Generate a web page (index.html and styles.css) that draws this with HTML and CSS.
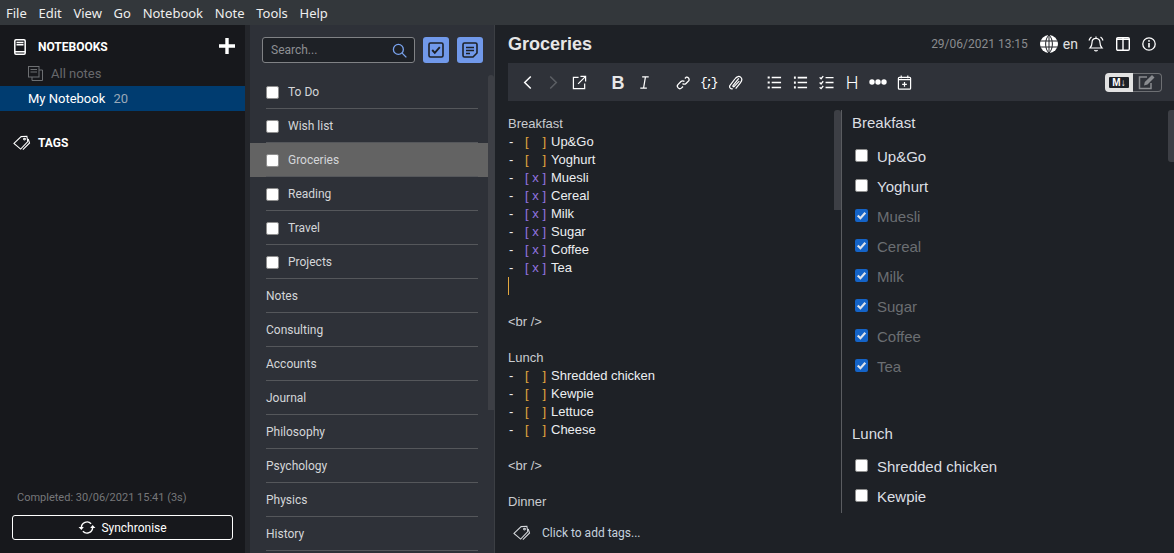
FILE: index.html
```html
<!DOCTYPE html>
<html>
  <head>
    <title>Joplin</title>
    <link rel="stylesheet" href="styles.css">
  </head>
  <body>
    <nav class="menubar">
      <span>File</span><span>Edit</span><span>View</span><span>Go</span><span>Notebook</span><span>Note</span><span>Tools</span><span>Help</span>
    </nav>

    <div class="app">
      <aside class="sidebar">
        <div class="side-head notebooks-head">
          <svg class="side-icon" viewBox="0 0 12 16" fill="none" stroke="#fff" stroke-width="1.500"><rect x="0.800" y="0.800" width="10.400" height="14.400" rx="1.200"/><path d="M2.500 3.500h7M2.500 5.800h7M1 12.800h10"/></svg>
          <span>NOTEBOOKS</span>
          <svg class="plus" viewBox="0 0 16 16" fill="#fff"><path d="M6.300 0h3.400v6.300H16v3.400H9.700V16H6.300V9.700H0V6.300h6.300z"/></svg>
        </div>
        <div class="all-notes">
          <svg viewBox="0 0 15 15" fill="none" stroke="#6d6f72" stroke-width="1"><rect x="0.500" y="0.500" width="10.500" height="10.500"/><path d="M2.500 3.500h6.500M2.500 6h6.500M11 4h3.500v10.500H4V11"/></svg>
          <span>All notes</span>
        </div>
        <div class="notebook-row">My Notebook <span class="count">20</span></div>
        <div class="side-head tags-head">
          <svg class="tag-icon" viewBox="0 0 20 18" fill="none" stroke="#fff" stroke-width="1.200"><path d="M1 9.500 9 1.800 15.500 1.500 16.500 7.500 8.500 15.800z"/><path d="M17 4.500 18.500 9 11 16.500"/><circle cx="12.800" cy="4.600" r="1"/></svg>
          <span>TAGS</span>
        </div>
        <div class="sync-area">
          <div class="sync-status">Completed: 30/06/2021 15:41 (3s)</div>
          <button class="sync-btn">
            <svg viewBox="0 0 18 16" fill="none" stroke="#fff" stroke-width="1.500"><path d="M3 8a6 6 0 0 1 10.400-4M15 8a6 6 0 0 1-10.400 4"/><path fill="#fff" stroke="none" d="M0 7.500h5.600L3 10.600zM18 8.500h-5.600L15 5.400z"/></svg>
            Synchronise
          </button>
        </div>
      </aside>

      <section class="note-list">
        <div class="list-head">
          <div class="search">
            <span>Search...</span>
            <svg viewBox="0 0 16 16" fill="none" stroke="#7aa3ee" stroke-width="1.400"><circle cx="6.800" cy="6.800" r="5.300"/><path d="m10.800 10.800 4.500 4.500"/></svg>
          </div>
          <button class="new-btn">
            <svg viewBox="0 0 16 16" fill="none" stroke="#1d2026" stroke-width="1.600"><rect x="1" y="1" width="14" height="14" rx="1.500"/><path d="m4.200 8 2.600 2.800 5-5.600" stroke-width="1.900"/></svg>
          </button>
          <button class="new-btn">
            <svg viewBox="0 0 16 16" fill="none" stroke="#1d2026" stroke-width="1.600"><path d="M2.500 1h11A1.500 1.500 0 0 1 15 2.500V11l-4 4H2.500A1.500 1.500 0 0 1 1 13.500v-11A1.500 1.500 0 0 1 2.500 1z"/><path d="M4 5.500h8M4 8.500h8M4 11.500h4"/></svg>
          </button>
        </div>
        <div class="list-body">
          <ul class="notes">
            <li><span class="check"></span><span class="label">To Do</span></li>
            <li><span class="check"></span><span class="label">Wish list</span></li>
            <li class="selected"><span class="check"></span><span class="label">Groceries</span></li>
            <li><span class="check"></span><span class="label">Reading</span></li>
            <li><span class="check"></span><span class="label">Travel</span></li>
            <li><span class="check"></span><span class="label">Projects</span></li>
            <li><span class="label">Notes</span></li>
            <li><span class="label">Consulting</span></li>
            <li><span class="label">Accounts</span></li>
            <li><span class="label">Journal</span></li>
            <li><span class="label">Philosophy</span></li>
            <li><span class="label">Psychology</span></li>
            <li><span class="label">Physics</span></li>
            <li><span class="label">History</span></li>
          </ul>
          <div class="list-scroll"><div class="list-thumb"></div></div>
        </div>
      </section>

      <main class="editor">
        <header class="title-row">
          <h1>Groceries</h1>
          <span class="stamp">29/06/2021 13:15</span>
          <svg class="globe" viewBox="0 0 18 18" fill="#fff"><circle cx="9" cy="9" r="9"/><path fill="none" stroke="#1e2126" stroke-width="1" d="M0 6h18M0 12h18M9 0v18M9 0C4.500 4 4.500 14 9 18M9 0c4.500 4 4.500 14 0 18"/></svg>
          <span class="lang">en</span>
          <svg class="head-icon bell" viewBox="0 0 16 16" fill="none" stroke="#fff" stroke-width="1.200"><path d="M8 2.300c-2.800 0-4 2-4 4.500 0 2.500-.8 4-2 5.200h12c-1.200-1.200-2-2.700-2-5.200 0-2.500-1.200-4.500-4-4.500zM6.500 14a1.700 1.700 0 0 0 3 0M1 4.500C1.500 3 2.300 1.800 3.500 1M15 4.500C14.500 3 13.700 1.800 12.500 1M8 .6v1.700"/></svg>
          <svg class="head-icon layout" viewBox="0 0 14 14" fill="none" stroke="#fff" stroke-width="1.400"><rect x="0.700" y="0.700" width="12.600" height="12.600" rx="1.200"/><path d="M7 1v12M1 2.200h12"/></svg>
          <svg class="head-icon info" viewBox="0 0 14 14" fill="none" stroke="#fff" stroke-width="1.300"><circle cx="7" cy="7" r="6.200"/><path d="M7 6v4.500" stroke-width="1.600"/><circle cx="7" cy="3.900" r="0.900" fill="#fff" stroke="none"/></svg>
        </header>

        <div class="toolbar">
          <div class="tool-group">
            <span class="tool"><svg viewBox="0 0 16 16" fill="none" stroke="#fff" stroke-width="1.600"><path d="M11.500 1.500 5 8l6.500 6.500"/></svg></span>
            <span class="tool"><svg viewBox="0 0 16 16" fill="none" stroke="#5c5f64" stroke-width="1.600"><path d="M4.500 1.500 11 8l-6.500 6.500"/></svg></span>
            <span class="tool"><svg viewBox="0 0 16 16" fill="none" stroke="#fff" stroke-width="1.300"><path d="M7 2.500H1.500V14.500H13.500V9M6.500 9.500 14 2M9 1.500h5.500V7"/></svg></span>
          </div>
          <div class="tool-group">
            <span class="tool tool-b">B</span>
            <span class="tool"><svg viewBox="0 0 16 16" fill="none" stroke="#fff" stroke-width="1.300"><path d="M5.500 2h7M3.500 14h7M9 2 7 14"/></svg></span>
          </div>
          <div class="tool-group">
            <span class="tool"><svg viewBox="0 0 16 16" fill="none" stroke="#fff" stroke-width="1.400"><path d="M7 9a2.600 2.600 0 0 0 3.700 0l3-3A2.600 2.600 0 0 0 11 2.300L9.500 3.800M9 7a2.600 2.600 0 0 0-3.700 0l-3 3A2.600 2.600 0 0 0 6 13.700l1.500-1.500"/></svg></span>
            <span class="tool tool-code">{;}</span>
            <span class="tool"><svg viewBox="0 0 16 16" fill="none" stroke="#fff" stroke-width="1.300"><path d="M5 14.500c-2 .8-4-1-3-3.200L7.500 4c2-2.800 4.500-3 6.200-1.500 1.500 1.500 1.300 3.600-.5 5.800l-5 6.200M11.500 3.500l-6 7.500c-.8 1 .3 2 1.200 1.200L12 6.500"/></svg></span>
          </div>
          <div class="tool-group">
            <span class="tool"><svg viewBox="0 0 16 16" fill="none" stroke="#fff" stroke-width="1.500"><path d="M5 2.700h10M5 8h10M5 13.300h10"/><path stroke-width="2.200" stroke-dasharray="2.200 3.100" d="M1.800 1.600v13"/></svg></span>
            <span class="tool"><svg viewBox="0 0 16 16" fill="none" stroke="#fff" stroke-width="1.800"><path d="M5 2.700h10M5 8h10M5 13.300h10"/><path stroke-width="2" stroke-dasharray="2.500 2.800" d="M2 1.500v13"/></svg></span>
            <span class="tool"><svg viewBox="0 0 16 16" fill="none" stroke="#fff" stroke-width="1.400"><path d="M7 2.700h8.500M7 8h8.500M7 13.300h8.500M.7 2.500l1.500 1.500L4.500 1.200M.7 8l1.500 1.500 2.300-2.800M.7 13l1.500 1.500 2.300-2.800"/></svg></span>
            <span class="tool tool-h">H</span>
            <span class="tool"><svg class="dots" viewBox="0 0 18 6" fill="#fff"><circle cx="3" cy="3" r="2.700"/><circle cx="9" cy="3" r="2.700"/><circle cx="15" cy="3" r="2.700"/></svg></span>
            <span class="tool"><svg viewBox="0 0 16 16" fill="none" stroke="#fff" stroke-width="1.300"><rect x="1.500" y="2.500" width="13" height="12.500" rx="1"/><path d="M1.500 5h13M4.500 .5v3M11.500 .5v3M8 7.500v5M5.500 10h5"/></svg></span>
          </div>
          <div class="toggle">
            <span class="toggle-md"><span class="md-badge">M&#8595;</span></span>
            <span class="toggle-edit"><svg viewBox="0 0 18 16" fill="none" stroke="#8a8c90" stroke-width="1.500"><path d="M13 9v5.500H1.500V3H9"/><path fill="#8a8c90" stroke="none" d="M6 11.500 6.800 8 14 1l2.500 2.500-7 7z"/></svg></span>
          </div>
        </div>

        <div class="panes">
          <div class="source">
            <div class="source-text">
              <div>Breakfast</div>
              <div class="item"><span class="dash">-</span><span class="box todo">[<i>&nbsp;</i>]</span>Up&amp;Go</div>
              <div class="item"><span class="dash">-</span><span class="box todo">[<i>&nbsp;</i>]</span>Yoghurt</div>
              <div class="item"><span class="dash">-</span><span class="box done">[<i>x</i>]</span>Muesli</div>
              <div class="item"><span class="dash">-</span><span class="box done">[<i>x</i>]</span>Cereal</div>
              <div class="item"><span class="dash">-</span><span class="box done">[<i>x</i>]</span>Milk</div>
              <div class="item"><span class="dash">-</span><span class="box done">[<i>x</i>]</span>Sugar</div>
              <div class="item"><span class="dash">-</span><span class="box done">[<i>x</i>]</span>Coffee</div>
              <div class="item"><span class="dash">-</span><span class="box done">[<i>x</i>]</span>Tea</div>
              <div class="cursor-line"><span class="cursor"></span></div>
              <div>&nbsp;</div>
              <div>&lt;br /&gt;</div>
              <div>&nbsp;</div>
              <div>Lunch</div>
              <div class="item"><span class="dash">-</span><span class="box todo">[<i>&nbsp;</i>]</span>Shredded chicken</div>
              <div class="item"><span class="dash">-</span><span class="box todo">[<i>&nbsp;</i>]</span>Kewpie</div>
              <div class="item"><span class="dash">-</span><span class="box todo">[<i>&nbsp;</i>]</span>Lettuce</div>
              <div class="item"><span class="dash">-</span><span class="box todo">[<i>&nbsp;</i>]</span>Cheese</div>
              <div>&nbsp;</div>
              <div>&lt;br /&gt;</div>
              <div>&nbsp;</div>
              <div>Dinner</div>
            </div>
            <div class="source-thumb"></div>
          </div>
          <div class="preview">
            <div class="preview-text">
              <p class="preview-head">Breakfast</p>
              <div class="task"><span class="check small"></span>Up&amp;Go</div>
              <div class="task"><span class="check small"></span>Yoghurt</div>
              <div class="task ticked"><span class="tick"><svg viewBox="0 0 12 12" fill="none" stroke="#dfe3ea" stroke-width="2"><path d="m2.500 6 2.500 2.500 4.500-5"/></svg></span>Muesli</div>
              <div class="task ticked"><span class="tick"><svg viewBox="0 0 12 12" fill="none" stroke="#dfe3ea" stroke-width="2"><path d="m2.500 6 2.500 2.500 4.500-5"/></svg></span>Cereal</div>
              <div class="task ticked"><span class="tick"><svg viewBox="0 0 12 12" fill="none" stroke="#dfe3ea" stroke-width="2"><path d="m2.500 6 2.500 2.500 4.500-5"/></svg></span>Milk</div>
              <div class="task ticked"><span class="tick"><svg viewBox="0 0 12 12" fill="none" stroke="#dfe3ea" stroke-width="2"><path d="m2.500 6 2.500 2.500 4.500-5"/></svg></span>Sugar</div>
              <div class="task ticked"><span class="tick"><svg viewBox="0 0 12 12" fill="none" stroke="#dfe3ea" stroke-width="2"><path d="m2.500 6 2.500 2.500 4.500-5"/></svg></span>Coffee</div>
              <div class="task ticked"><span class="tick"><svg viewBox="0 0 12 12" fill="none" stroke="#dfe3ea" stroke-width="2"><path d="m2.500 6 2.500 2.500 4.500-5"/></svg></span>Tea</div>
              <p class="preview-head lunch">Lunch</p>
              <div class="task"><span class="check small"></span>Shredded chicken</div>
              <div class="task"><span class="check small"></span>Kewpie</div>
            </div>
            <div class="preview-thumb"></div>
          </div>
        </div>

        <footer class="tag-bar">
          <svg viewBox="0 0 20 18" fill="none" stroke="#d5d8dc" stroke-width="1.200"><path d="M1 9.500 9 1.800 15.500 1.500 16.500 7.500 8.500 15.800z"/><path d="M17 4.500 18.500 9 11 16.500"/><circle cx="12.800" cy="4.600" r="1"/></svg>
          <span>Click to add tags...</span>
        </footer>
      </main>
    </div>
  </body>
</html>
```

FILE: styles.css
```css
* {
  box-sizing: border-box;
}

html,
body {
  height: 100%;
}

body {
  margin: 0;
  display: flex;
  flex-direction: column;
  overflow: hidden;
  background-color: #1e2126;
  font-family: Roboto, sans-serif;
  font-size: 12px;
  color: #e0e0e0;
}

svg {
  display: block;
  flex: none;
}

/* menu */
.menubar {
  flex: none;
  height: 25px;
  display: flex;
  align-items: center;
  gap: 11.7px;
  padding-left: 6px;
  background-color: #33373b;
  font-family: "Noto Sans", sans-serif;
  font-size: 13px;
  color: #eeeeee;
}

.app {
  flex: 1;
  min-height: 0;
  display: flex;
}

/* left sidebar */
.sidebar {
  flex: none;
  width: 245px;
  display: flex;
  flex-direction: column;
  background-color: #17181c;
}

.side-head {
  display: flex;
  align-items: center;
  font-weight: 700;
  font-size: 12px;
  color: #ffffff;
}

.notebooks-head {
  height: 22px;
  margin-top: 11px;
  padding-left: 14px;
}

.side-icon {
  width: 12px;
  height: 16px;
  margin-right: 12px;
}

.plus {
  width: 16px;
  height: 16px;
  margin-left: auto;
  margin-right: 10px;
  margin-top: -2px;
}

.all-notes {
  height: 23px;
  margin-top: 4px;
  display: flex;
  align-items: center;
  gap: 8px;
  padding-left: 28px;
  font-size: 13px;
  color: #68696c;
}

.all-notes svg {
  width: 15px;
  height: 15px;
}

.notebook-row {
  height: 25px;
  margin-top: 1px;
  padding-left: 28px;
  line-height: 25px;
  font-size: 13px;
  background-color: #003c70;
  color: #ffffff;
}

.count {
  margin-left: 5px;
  color: #9aa9b8;
}

.tags-head {
  margin-top: 21px;
  height: 22px;
  padding-left: 13px;
}

.tag-icon {
  width: 18px;
  height: 16px;
  margin-right: 7px;
}

.sync-area {
  margin-top: auto;
  padding: 0 12px 13px;
}

.sync-status {
  padding-left: 5px;
  margin-bottom: 11px;
  font-size: 11px;
  color: #76777a;
}

.sync-btn {
  width: 221px;
  height: 25px;
  display: flex;
  align-items: center;
  justify-content: center;
  gap: 5px;
  padding: 0;
  background: transparent;
  border: 1px solid #ffffff;
  border-radius: 3px;
  font-family: Roboto, sans-serif;
  font-size: 12px;
  color: #ffffff;
}

.sync-btn svg {
  width: 18px;
  height: 15px;
}

/* note list */
.note-list {
  flex: none;
  width: 250px;
  display: flex;
  flex-direction: column;
  border-left: 5px solid #24262b;
  border-right: 1px solid #3c3f44;
  background-color: #2e3138;
}

.list-head {
  flex: none;
  height: 50px;
  display: flex;
  align-items: flex-start;
  padding-left: 12px;
  padding-top: 12px;
}

.search {
  width: 153px;
  height: 26px;
  display: flex;
  align-items: center;
  justify-content: space-between;
  padding: 0 7px 0 8px;
  margin-right: 8px;
  background-color: #1e2126;
  border: 1px solid #808285;
  border-radius: 3px;
  font-size: 12px;
  color: #8d8f93;
}

.search svg {
  width: 15px;
  height: 15px;
}

.new-btn {
  width: 26px;
  height: 26px;
  margin-right: 8px;
  padding: 0;
  display: flex;
  align-items: center;
  justify-content: center;
  background-color: #7199ea;
  border: none;
  border-radius: 3px;
}

.new-btn svg {
  width: 16px;
  height: 16px;
}

.list-body {
  flex: 1;
  min-height: 0;
  display: flex;
}

.notes {
  flex: 1;
  min-width: 0;
  margin: 0;
  padding: 0;
  list-style: none;
  overflow: hidden;
}

.notes li {
  position: relative;
  height: 34px;
  margin: 0;
  padding: 0 10px 0 16px;
  display: flex;
  align-items: center;
  color: #d4d6d9;
}

.notes li::after {
  content: "";
  position: absolute;
  left: 16px;
  right: 10px;
  bottom: 0;
  height: 1px;
  background-color: #55575b;
}

.notes .selected {
  background-color: #636363;
}

.check {
  flex: none;
  width: 13px;
  height: 13px;
  margin-right: 9px;
  background-color: #ffffff;
  border: 1px solid #8f8f8f;
  border-radius: 2px;
}

.list-scroll {
  flex: none;
  width: 6px;
}

.list-thumb {
  height: 335px;
  background-color: #3d3f45;
  border-radius: 3px 3px 0 0;
}

/* editor */
.editor {
  flex: 1;
  min-width: 0;
  display: flex;
  flex-direction: column;
  background-color: #1e2126;
}

.title-row {
  flex: none;
  height: 38px;
  display: flex;
  align-items: center;
  padding: 0 18px 0 13px;
}

.title-row h1 {
  margin: 0 auto 0 0;
  font-family: "Liberation Sans", sans-serif;
  font-size: 18px;
  font-weight: 700;
  color: #e6e6e6;
}

.stamp {
  color: #8a8c8f;
}

.globe {
  width: 18px;
  height: 18px;
  margin-left: 12px;
}

.lang {
  margin-left: 5px;
  font-size: 14px;
  color: #e0e0e0;
}

.head-icon {
  width: 14px;
  height: 14px;
}

.bell {
  width: 16px;
  height: 16px;
  margin-left: 10px;
}

.layout {
  margin-left: 12px;
}

.info {
  margin-left: 12px;
}

.toolbar {
  flex: none;
  height: 38px;
  margin-left: 13px;
  display: flex;
  align-items: center;
  gap: 13px;
  padding: 0 12px 0 6px;
  background-color: #2f3239;
}

.tool-group {
  display: flex;
}

.tool {
  width: 26px;
  height: 20px;
  display: flex;
  align-items: center;
  justify-content: center;
  color: #ffffff;
}

.tool svg {
  width: 15px;
  height: 15px;
}

.tool .dots {
  width: 18px;
  height: 6px;
}

.tool-b {
  padding-top: 2px;
  font-family: "Liberation Sans", sans-serif;
  font-size: 18px;
  font-weight: 700;
  color: #e8e8e8;
}

.tool-code {
  font-family: "Liberation Mono", monospace;
  font-size: 13px;
  letter-spacing: -2.5px;
  padding-right: 2px;
}

.tool-h {
  font-family: Roboto, sans-serif;
  font-size: 18px;
  font-weight: 300;
}

.toggle {
  margin-left: auto;
  display: flex;
  height: 19px;
}

.toggle-md {
  width: 28px;
  display: flex;
  align-items: center;
  justify-content: center;
  background-color: #e2e2e2;
  border-radius: 4px 0 0 4px;
}

.md-badge {
  width: 20px;
  height: 11px;
  background-color: #1d2026;
  color: #ffffff;
  border-radius: 1px;
  font-family: "Liberation Sans", sans-serif;
  font-size: 10px;
  font-weight: 700;
  line-height: 11px;
  text-align: center;
}

.toggle-edit {
  width: 29px;
  display: flex;
  align-items: center;
  justify-content: center;
  border: 1px solid #6d6f73;
  border-left: none;
  border-radius: 0 4px 4px 0;
}

.toggle-edit svg {
  width: 18px;
  height: 16px;
}

.panes {
  flex: 1;
  min-height: 0;
  margin-top: 9px;
  display: flex;
}

.source {
  flex: none;
  width: 347px;
  display: flex;
  justify-content: space-between;
  overflow: hidden;
  border-right: 1px solid #5a5c60;
}

.source-text {
  padding: 5px 0 0 13px;
  font-family: "Liberation Sans", sans-serif;
  font-size: 13px;
  line-height: 18px;
  color: #c9ccd0;
}

.item {
  display: flex;
  align-items: center;
  color: #eceef1;
}

.dash {
  width: 17px;
  padding-left: 1px;
}

.box {
  width: 21px;
  margin-right: 5px;
  display: flex;
  justify-content: space-between;
}

.box i {
  font-style: normal;
}

.todo {
  color: #e2a73f;
}

.done {
  color: #9274e0;
}

.cursor-line {
  height: 18px;
}

.cursor {
  display: block;
  width: 1px;
  height: 18px;
  background-color: #e2a73f;
}

.source-thumb {
  flex: none;
  width: 7px;
  height: 100px;
  background-color: #3d3f45;
  border-radius: 3px 3px 0 0;
}

.preview {
  flex: 1;
  min-width: 0;
  display: flex;
  justify-content: space-between;
  overflow: hidden;
}

.preview-text {
  padding-left: 10px;
  font-family: "Liberation Sans", sans-serif;
  font-size: 15px;
  color: #dcdfe3;
}

.preview-head {
  margin: 4px 0 10px;
  line-height: 17px;
  color: #dcdfe3;
}

.lunch {
  margin-top: 44px;
  margin-bottom: 9px;
}

.task {
  height: 30px;
  padding-left: 3px;
  display: flex;
  align-items: center;
}

.check.small {
  margin-right: 9px;
  margin-top: -2px;
}

.ticked {
  color: #6b6e72;
}

.tick {
  flex: none;
  width: 13px;
  height: 13px;
  margin-right: 9px;
  margin-top: -2px;
  background-color: #1463c7;
  border-radius: 2px;
}

.preview-thumb {
  flex: none;
  width: 6px;
  height: 52px;
  background-color: #3d3f45;
  border-radius: 3px 0 0 3px;
}

.tag-bar {
  flex: none;
  height: 40px;
  display: flex;
  align-items: center;
  padding-left: 18px;
  color: #c5d1de;
}

.tag-bar svg {
  width: 18px;
  height: 16px;
  margin-right: 11px;
}
```
